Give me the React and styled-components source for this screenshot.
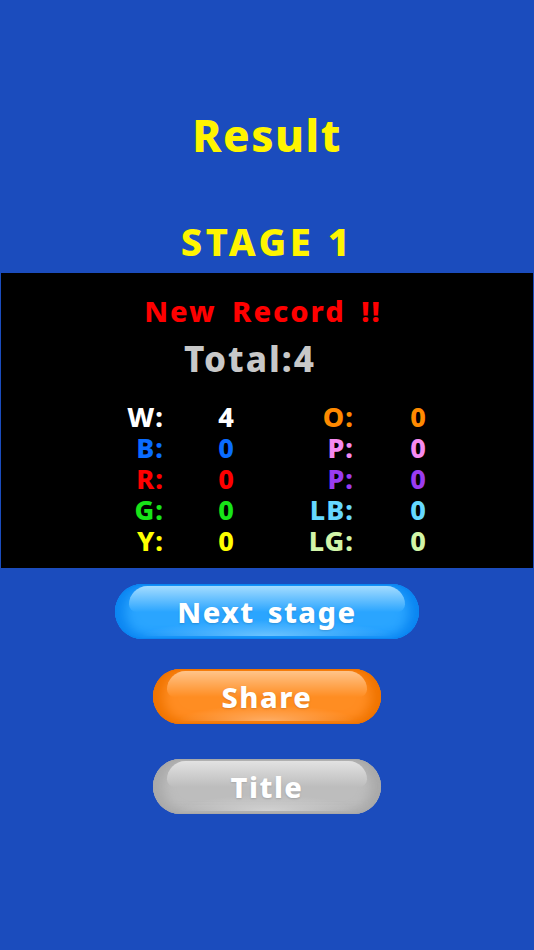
import React from 'react';
import styled, { createGlobalStyle, css } from 'styled-components';

const GlobalStyle = createGlobalStyle`
  html, body {
    margin: 0;
    padding: 0;
    background: #1b4cbd;
  }
  body {
    font-family: "Noto Sans", "DejaVu Sans", sans-serif;
  }
`;

const Screen = styled.div`
  width: 534px;
  height: 950px;
  background: #1b4cbd;
  display: flex;
  flex-direction: column;
  align-items: center;
  overflow: hidden;
`;

const Heading = styled.div`
  color: #fff500;
  font-weight: 800;
  font-size: ${({ size }) => size}px;
  line-height: ${({ lh }) => lh}px;
  letter-spacing: ${({ ls }) => ls || 0}px;
  margin-top: ${({ top }) => top}px;
  text-align: center;
`;

const Panel = styled.div`
  box-sizing: border-box;
  width: 532px;
  height: 295px;
  margin-top: 10px;
  background: #000;
  display: flex;
  flex-direction: column;
  align-items: center;
`;

const Record = styled.div`
  color: #ff0000;
  font-weight: 800;
  font-size: 29px;
  line-height: 40px;
  letter-spacing: 2px;
  margin-top: 18px;
  margin-right: 8px;
  word-spacing: 6px;
`;

const Total = styled.div`
  color: #c8c8c8;
  font-weight: 800;
  font-size: 35px;
  line-height: 44px;
  letter-spacing: 2px;
  margin-top: 6px;
  margin-right: 34px;
`;

const Grid = styled.div`
  display: grid;
  grid-template-columns: 80px 124px 66px 128px;
  grid-auto-rows: 31px;
  align-self: flex-start;
  margin-left: 83px;
  margin-top: 20px;
  font-weight: 800;
  font-size: 27px;
  line-height: 31px;
`;

const Label = styled.div`
  text-align: right;
  letter-spacing: 1px;
  color: ${({ color }) => color};
`;

const Value = styled.div`
  text-align: center;
  color: ${({ color }) => color};
`;

const looks = {
  blue: { edge: '#0b86f2', mid: '#2aa5ff', hi: '#a4dcff', glow: '#6cc4ff' },
  orange: { edge: '#f07400', mid: '#ff8d22', hi: '#ffc48a', glow: '#ffae66' },
  gray: { edge: '#a9a9a9', mid: '#bdbdbd', hi: '#e2e2e2', glow: '#d2d2d2' },
};

const GlossButton = styled.button`
  position: relative;
  box-sizing: border-box;
  width: ${({ w }) => w}px;
  height: 55px;
  margin-top: ${({ top }) => top}px;
  border: none;
  border-radius: 28px;
  padding: 0;
  cursor: pointer;
  font-family: "Noto Sans", "DejaVu Sans", sans-serif;
  font-weight: 800;
  font-size: 29px;
  letter-spacing: 1.5px;
  color: #fff;
  ${({ tone }) => {
    const t = looks[tone];
    return css`
      background: ${t.mid};
      box-shadow: inset 0 0 0 1px ${t.edge}, inset 10px 0 12px ${t.edge}, inset -10px 0 12px ${t.edge};
      &::before {
        content: '';
        position: absolute;
        left: 14px;
        right: 14px;
        top: 2px;
        height: 26px;
        border-radius: 24px 24px 10px 10px;
        background: linear-gradient(to bottom, ${t.hi}, ${t.mid});
      }
      &::after {
        content: '';
        position: absolute;
        left: 24px;
        right: 24px;
        bottom: 3px;
        height: 16px;
        border-radius: 14px;
        background: radial-gradient(ellipse at 50% 100%, ${t.glow}, transparent 70%);
      }
    `;
  }}
`;

const ButtonText = styled.span`
  position: relative;
  z-index: 1;
  text-shadow: 0 1px 2px rgba(0, 0, 0, 0.15);
  word-spacing: 4px;
`;

const rows = [
  ['W:', '#ffffff', '4', 'O:', '#ff8a00', '0'],
  ['B:', '#0a6cff', '0', 'P:', '#f58af0', '0'],
  ['R:', '#ff0000', '0', 'P:', '#9a3cf0', '0'],
  ['G:', '#18e418', '0', 'LB:', '#66d8ff', '0'],
  ['Y:', '#ffff00', '0', 'LG:', '#d2f5a8', '0'],
];

export default function App() {
  return (
    <>
      <GlobalStyle />
      <Screen>
        <Heading size={44} lh={50} ls={1.5} top={110}>Result</Heading>
        <Heading size={38} lh={44} ls={3.5} top={59}>STAGE 1</Heading>
        <Panel>
          <Record>New Record !!</Record>
          <Total>Total:4</Total>
          <Grid>
            {rows.map((r, i) => (
              <React.Fragment key={i}>
                <Label color={r[1]}>{r[0]}</Label>
                <Value color={r[1]}>{r[2]}</Value>
                <Label color={r[4]}>{r[3]}</Label>
                <Value color={r[4]}>{r[5]}</Value>
              </React.Fragment>
            ))}
          </Grid>
        </Panel>
        <GlossButton tone="blue" w={304} top={16}><ButtonText>Next stage</ButtonText></GlossButton>
        <GlossButton tone="orange" w={228} top={30}><ButtonText>Share</ButtonText></GlossButton>
        <GlossButton tone="gray" w={228} top={35}><ButtonText>Title</ButtonText></GlossButton>
      </Screen>
    </>
  );
}
